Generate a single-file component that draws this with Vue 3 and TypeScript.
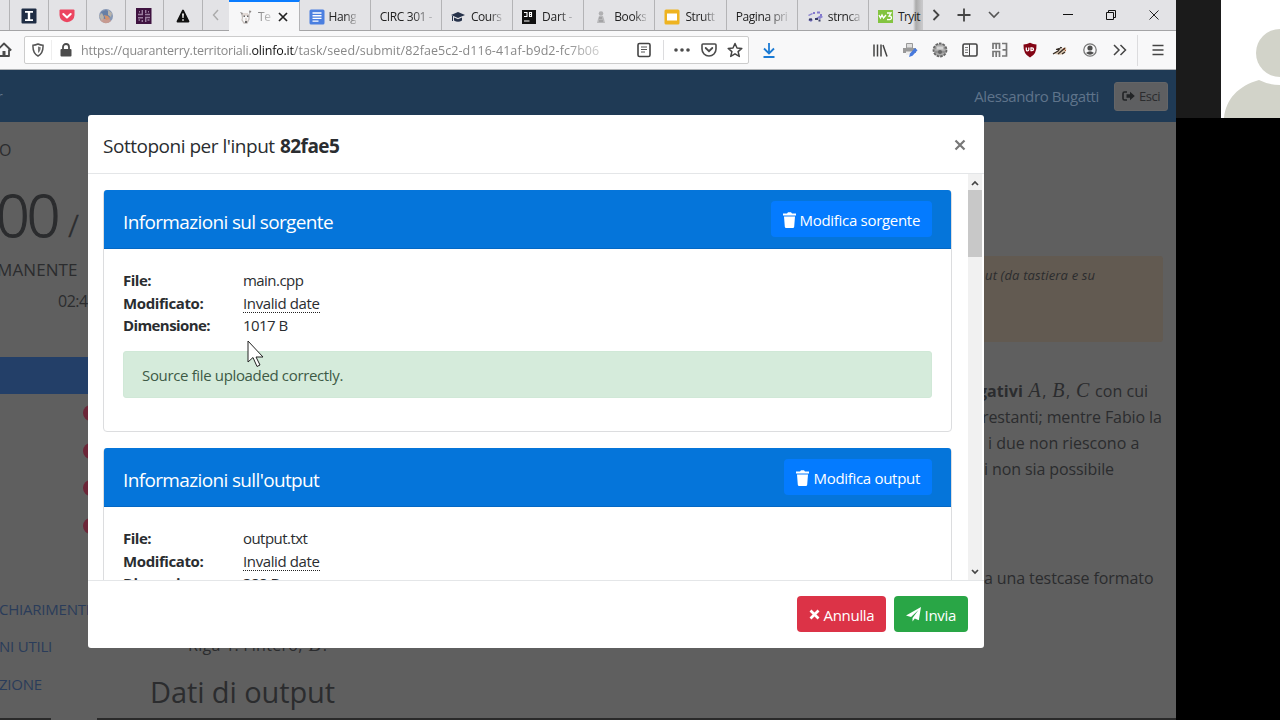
<script setup lang="ts">
interface Tab {
  id: string
  label: string
}
interface FileCard {
  title: string
  action: string
  file: string
  modified: string
  size: string
  message: string
}

const pinned: string[] = ['instapaper', 'pocket', 'globe', 'slack', 'alert']
const tabs: Tab[] = [
  { id: 'docs', label: 'Hang' },
  { id: 'circ', label: 'CIRC 301 -' },
  { id: 'course', label: 'Cours' },
  { id: 'dart', label: 'Dart -' },
  { id: 'books', label: 'Books' },
  { id: 'slides', label: 'Strutt' },
  { id: 'pagina', label: 'Pagina pri' },
  { id: 'cpp', label: 'strnca' },
  { id: 'w3', label: 'Tryit' },
]
const cards: FileCard[] = [
  {
    title: 'Informazioni sul sorgente',
    action: 'Modifica sorgente',
    file: 'main.cpp',
    modified: 'Invalid date',
    size: '1017 B',
    message: 'Source file uploaded correctly.',
  },
  {
    title: "Informazioni sull'output",
    action: 'Modifica output',
    file: 'output.txt',
    modified: 'Invalid date',
    size: '388 B',
    message: '',
  },
]
</script>

<template>
  <div class="stage">
    <div class="browser">
      <div class="tabstrip">
        <div class="lead"></div>
        <div v-for="p in pinned" :key="p" class="pin">
          <svg v-if="p === 'instapaper'" width="16" height="16" viewBox="0 0 16 16">
            <rect x="0.500" y="0.500" width="15" height="15" rx="1" fill="#1f2d44" />
            <path d="M4 3h8v1.700H9.200v6.600H12V13H4v-1.700h2.800V4.700H4z" fill="#fff" />
          </svg>
          <svg v-else-if="p === 'pocket'" width="16" height="16" viewBox="0 0 16 16">
            <path d="M1.500 1.500h13q1 0 1 1V7a7.500 7.200 0 0 1-15 0V2.500q0-1 1-1z" fill="#ec4660" />
            <path d="M4.300 6 8 9.500 11.700 6" fill="none" stroke="#fff" stroke-width="2" stroke-linecap="round" stroke-linejoin="round" />
          </svg>
          <svg v-else-if="p === 'globe'" width="16" height="16" viewBox="0 0 16 16">
            <circle cx="8" cy="8" r="7" fill="#8697b5" />
            <path d="M2 12a7 7 0 0 0 11 1l-3-4-5-1z" fill="#c79a90" />
            <path d="M3 4l5-2 5 3-2 5-5 1z" fill="#667fa6" />
            <path d="M1 8l3-3 2 4-2 4zM10 2l4 3-1 4-3-2z" fill="#b8b3aa" />
            <path d="M6 7l4 1 2 3-4 1z" fill="#d0926c" />
          </svg>
          <svg v-else-if="p === 'slack'" width="16" height="16" viewBox="0 0 16 16">
            <rect width="15.500" height="16" fill="#3f1340" />
            <g fill="none" stroke="#9b7fa0" stroke-width="1.400">
              <path d="M6.300 2v4.500H2M9.700 2v3M14 6.500H9M2 9.700h5M9.700 14V9.500H14M6.300 14v-2M11.500 12h2M2.500 12h1.500M3 3.800h1M12 3.800h1" />
            </g>
          </svg>
          <svg v-else width="16" height="16" viewBox="0 0 16 16">
            <path d="M8 2.500 13.500 13.500h-11z" fill="#111" stroke="#111" stroke-width="1.800" stroke-linejoin="round" />
            <path d="M7 5.500h2L8.600 10H7.400zM7.200 11.200h1.600v1.600H7.200z" fill="#eee" />
          </svg>
        </div>
        <div class="scroll-left">
          <svg width="8" height="12" viewBox="0 0 8 12"><path d="M6 1 1.500 6 6 11" fill="none" stroke="#aaa" stroke-width="1.400" /></svg>
        </div>
        <div class="tab active">
          <svg width="14" height="16" viewBox="0 0 14 16">
            <path d="M3 5q1 4 0 6l2 3h3l2-4V5" fill="none" stroke="#c5bebb" stroke-width="1.300" />
            <path d="M4 4h5v3H4zM6 9h2v5H6z" fill="#e2d9d5" />
            <path d="M10 1.500l2.500.5L10.500 5zM1 3l3 1-1 2z" fill="#8d8887" />
            <path d="M4.500 6.500h1.500V8H4.500zM8 6.500h1.500V8H8zM6 12h2v2H6z" fill="#666" />
          </svg>
          <span class="label">Te</span>
          <svg class="close" width="10" height="10" viewBox="0 0 10 10"><path d="M1 1l8 8M9 1 1 9" stroke="#222" stroke-width="1.700" /></svg>
        </div>
        <div v-for="t in tabs" :key="t.id" class="tab" :class="t.id">
          <svg v-if="t.id === 'docs'" width="16" height="16" viewBox="0 0 16 16">
            <rect x="0.500" y="0.500" width="15" height="15" rx="1.500" fill="#4b7fe0" />
            <path d="M3.500 4h9M3.500 6.700h9M3.500 9.400h9M3.500 12.100h6" stroke="#fff" stroke-width="1.400" />
          </svg>
          <svg v-else-if="t.id === 'course'" width="14" height="14" viewBox="0 0 14 14">
            <path d="M0 5l7-3 7 3-7 3z" fill="#26324a" />
            <path d="M3 7.500v3q4 2.500 8 0v-3L7 9.300zM1 6h1v5H1z" fill="#26324a" />
          </svg>
          <svg v-else-if="t.id === 'dart'" width="14" height="14" viewBox="0 0 14 14">
            <rect width="14" height="14" fill="#111" />
            <path d="M2 2.500h3v4H2M7.500 2v5M7 2.500h2.500v4H7M7.500 4.500H10M2 11h5.500" fill="none" stroke="#fff" stroke-width="1.100" />
          </svg>
          <svg v-else-if="t.id === 'books'" width="14" height="14" viewBox="0 0 14 14">
            <circle cx="8" cy="3.500" r="2.300" fill="#b0b0b2" />
            <path d="M6 6h4l1 3 1 4H4l1-4z" fill="#b8b8ba" />
            <path d="M6 8h3M6 11h4" stroke="#8e8e90" />
          </svg>
          <svg v-else-if="t.id === 'slides'" width="16" height="16" viewBox="0 0 16 16">
            <rect x="0.500" y="0.500" width="15" height="15" rx="1.500" fill="#eeb320" />
            <rect x="3" y="4.500" width="10" height="7" fill="#fff" />
          </svg>
          <svg v-else-if="t.id === 'cpp'" width="16" height="14" viewBox="0 0 16 14">
            <path d="M1 5l4-2 1 1-4 2zM1 10l3-2 2 2-2 2zM9 8l5-3 2 2-3 2z" fill="#8a83d0" />
            <path d="M6 3h2M10 2.500h3M13 5h2" stroke="#8478cc" stroke-width="1.800" />
            <path d="M2 9.500h3M8 9h3M11.500 10.500h2" stroke="#3b3f66" stroke-width="2" />
          </svg>
          <svg v-else-if="t.id === 'w3'" width="15" height="13" viewBox="0 0 15 13">
            <rect width="15" height="13" fill="#83c440" />
            <path d="M1 5l1.500 3L4 5l1.500 3L8 5" fill="none" stroke="#fff" stroke-width="1.300" />
            <path d="M9 3h4l-2 3q2.500 0 2.500 2T9 9.500" fill="none" stroke="#fff" stroke-width="1.300" />
          </svg>
          <span class="label">{{ t.label }}</span>
        </div>
        <div class="strip-tools">
          <svg width="8" height="12" viewBox="0 0 8 12"><path d="M1.500 1 6.500 6 1.500 11" fill="none" stroke="#444" stroke-width="1.800" /></svg>
          <svg width="14" height="14" viewBox="0 0 14 14"><path d="M7 .5v13M.5 7h13" stroke="#444" stroke-width="1.800" /></svg>
          <svg width="12" height="8" viewBox="0 0 12 8"><path d="M1 1l5 5 5-5" fill="none" stroke="#555" stroke-width="1.600" /></svg>
        </div>
        <div class="window-tools">
          <svg width="10" height="10" viewBox="0 0 10 10"><path d="M0 4.500h10" stroke="#111" /></svg>
          <svg width="10" height="10" viewBox="0 0 10 10"><path d="M.5 2.500h7v7h-7zM2.500 2.500v-2h7v7h-2" fill="none" stroke="#111" /></svg>
          <svg width="10" height="10" viewBox="0 0 10 10"><path d="M.5.5l9 9M9.500.5l-9 9" stroke="#222" stroke-width="1" /></svg>
        </div>
      </div>

      <div class="toolbar">
        <svg class="home" width="16" height="16" viewBox="0 0 16 16">
          <path d="M.8 8.500 8 1.500l7.200 7M3 7.500V14h10V7.500" fill="none" stroke="#4a4a4a" stroke-width="1.800" stroke-linejoin="round" />
          <path d="M6.500 14V9h3v5z" fill="#4a4a4a" />
        </svg>
        <div class="urlbar">
          <svg class="shield" width="12" height="14" viewBox="0 0 12 14">
            <path d="M1 2.200Q3.500 2.200 6 1q2.500 1.200 5 1.200Q11.500 10 6 13 .5 10 1 2.200z" fill="none" stroke="#555" stroke-width="1.500" />
            <path d="M6 3.500v6.500Q8.800 8 8.700 4.200z" fill="#777" />
          </svg>
          <i class="thin faint"></i>
          <svg class="lock" width="12" height="14" viewBox="0 0 12 14">
            <rect x="0.500" y="6" width="11" height="7.500" rx="1" fill="#4c4c4c" />
            <path d="M3 6V4a3 3 0 0 1 6 0v2" fill="none" stroke="#4c4c4c" stroke-width="1.800" />
          </svg>
          <span class="url"><span>https://quaranterry.territoriali.<b>olinfo.it</b></span><span class="path">/task/seed/submit/82fae5c2-d116-41af-b9d2-fc7b06</span></span>
          <svg class="reader" width="14" height="16" viewBox="0 0 14 16">
            <rect x="1" y="1.500" width="12" height="13" rx="1.500" fill="none" stroke="#444" stroke-width="1.600" />
            <path d="M4 5h6M4 7.500h6M4 10h4" stroke="#555" />
          </svg>
          <i class="thin"></i>
          <svg class="dots" width="16" height="4" viewBox="0 0 16 4"><circle cx="2" cy="2" r="1.800" /><circle cx="8" cy="2" r="1.800" /><circle cx="14" cy="2" r="1.800" /></svg>
          <svg class="pocket" width="16" height="14" viewBox="0 0 16 14">
            <path d="M2 1h12q1 0 1 1v4a7 7 0 0 1-14 0V2q0-1 1-1z" fill="none" stroke="#4c4c4c" stroke-width="1.600" />
            <path d="M4.700 5 8 8.200 11.300 5" fill="none" stroke="#4c4c4c" stroke-width="1.800" stroke-linecap="round" />
          </svg>
          <svg class="star" width="16" height="16" viewBox="0 0 16 16">
            <path d="M8 1.500 10 6l4.800.4-3.700 3.200 1.200 4.800L8 11.800l-4.300 2.600 1.200-4.800L1.200 6.400 6 6z" fill="none" stroke="#444" stroke-width="1.500" stroke-linejoin="round" />
          </svg>
        </div>
        <svg class="download" width="14" height="16" viewBox="0 0 14 16">
          <path d="M7 1v10M2 6.500l5 5 5-5M1.500 15h11" fill="none" stroke="#1c7bd4" stroke-width="1.800" />
        </svg>
        <div class="addons">
          <svg width="16" height="16" viewBox="0 0 16 16"><path d="M2 2.500v12M5.500 2.500v12M9 2.500v12M11 3l4 11.500" stroke="#444" stroke-width="1.500" /></svg>
          <svg width="16" height="16" viewBox="0 0 16 16">
            <path d="M4.500 1.500h6V6h-6z" fill="#dedede" stroke="#999" />
            <path d="M1 6h13v5H1z" fill="#999" />
            <path d="M4 9.500h6V13H4z" fill="#eee" />
            <path d="M7 15l1-3.500L13 6l2.500 2.200-5 5.500z" fill="#4779dd" />
          </svg>
          <svg width="16" height="16" viewBox="0 0 16 16">
            <circle cx="8" cy="8" r="6.500" fill="#aaa" stroke="#666" stroke-width="1.800" stroke-dasharray="2.600 1" />
            <path d="M3 6h10M3 10h10" stroke="#777" />
            <path d="M4.500 4.500h7v3h-7z" fill="#d4d4d4" />
            <circle cx="8" cy="10" r="2" fill="#666" />
          </svg>
          <svg width="16" height="16" viewBox="0 0 16 16">
            <rect x="1" y="2" width="14" height="12" rx="1.500" fill="none" stroke="#444" stroke-width="1.600" />
            <path d="M7.500 2v12" stroke="#444" /><path d="M3 5.500h3M3 8h3M3 10.500h3" stroke="#777" />
          </svg>
          <svg width="16" height="16" viewBox="0 0 16 16" fill="none" stroke="#777" stroke-width="1.700">
            <path d="M1 7V1.500h6.500V7M4.200 2v5M1 15V9.500h6.500V15M4.200 10v5M10 1.500h4.500V14H10M10.500 7.800h4" />
          </svg>
          <svg width="16" height="16" viewBox="0 0 16 16">
            <path d="M8 .7q3 1.800 6.500 1.800Q15 12 8 15.500 1 12 1.500 2.500 5 2.500 8 .7z" fill="#830515" />
            <path d="M4.300 5.500v2.200q0 1.200 1.200 1.200T6.800 7.700V5.500M9 5.800v2.800h1q1.500 0 1.500-1.400T10 5.800z" fill="none" stroke="#fff" stroke-width="1.300" />
          </svg>
          <svg width="16" height="16" viewBox="0 0 16 16">
            <path d="M1 11q5-1 8-4l5-2q1 4-2 7-6 2-11-1z" fill="#d9c4ad" />
            <path d="M1 12l5-3 3-4M6 12l7-6M4 7.500l6-2M10 12l3-2" fill="none" stroke="#332b24" stroke-width="1.200" />
            <path d="M11 6l3 3" stroke="#a45a38" />
          </svg>
          <svg width="16" height="16" viewBox="0 0 16 16">
            <circle cx="8" cy="8" r="6.200" fill="none" stroke="#777" stroke-width="1.300" />
            <circle cx="8" cy="6" r="2.600" fill="#4d4d4d" /><path d="M4 11q4-3.500 8 0-4 3.500-8 0z" fill="#4d4d4d" />
          </svg>
          <svg width="16" height="16" viewBox="0 0 16 16"><path d="M2 3l5 5-5 5M8.500 3l5 5-5 5" fill="none" stroke="#444" stroke-width="1.500" /></svg>
        </div>
        <i class="thin menu-sep"></i>
        <svg class="menu" width="12" height="12" viewBox="0 0 12 12"><path d="M.5 1.500h11M.5 6h11M.5 10.500h11" stroke="#444" stroke-width="1.500" /></svg>
      </div>

      <div class="page">
        <div class="navbar">
          <span class="crumb">r</span>
          <span class="user">Alessandro Bugatti</span>
          <span class="logout">
            <svg width="13" height="11" viewBox="0 0 13 11">
              <path d="M5 1H2.500Q1 1 1 2.500v5Q1 9 2.500 9H5" fill="none" stroke="#222426" stroke-width="1.600" />
              <path d="M4.500 3.300h3.500V.7L12.800 5 8 9.300V6.700H4.500z" fill="#222426" />
            </svg>
            <span>Esci</span>
          </span>
        </div>
        <div class="columns">
          <aside>
            <div class="s-head">O</div>
            <div class="s-score"><span>00</span><small>/</small></div>
            <div class="s-left">MANENTE</div>
            <div class="s-time">02:4</div>
            <div class="s-selected"></div>
            <div class="s-badges"><i v-for="n in 4" :key="n"></i></div>
            <div class="s-links"><span>CHIARIMENTI</span><span>NI UTILI</span><span>ZIONE</span></div>
          </aside>
          <main>
            <div class="hint">ut (da tastiera e su</div>
            <div class="para">
              <p class="l1"><b>gativi</b> <em>A</em>, <em>B</em>, <em>C</em> con cui</p>
              <p class="l2">restanti; mentre Fabio la</p>
              <p class="l3">i due non riescono a</p>
              <p class="l4">i non sia possibile</p>
            </div>
            <p class="format">a una testcase formato</p>
            <p class="riga"><span class="bullet">•</span><span>Riga 1: l'intero, <em>B</em>.</span></p>
            <h2>Dati di output</h2>
          </main>
        </div>
        <div class="bottom-edge"><i></i></div>
      </div>

      <div class="modal">
        <header>
          <h5>Sottoponi per l'input <b>82fae5</b></h5>
          <svg width="12" height="12" viewBox="0 0 12 12"><path d="M1.500 1.500l9 9M10.500 1.500l-9 9" stroke="#777" stroke-width="2.200" /></svg>
        </header>
        <div class="body">
          <div class="cards">
            <section v-for="c in cards" :key="c.title" class="card">
              <div class="card-head">
                <h4>{{ c.title }}</h4>
                <button>
                  <svg width="13" height="16" viewBox="0 0 13 16"><path d="M0 1.500h4L5 .3h3l1 1.200h4v2H0zM1 4.500h11l-.8 10.200q-.1 1.300-1.400 1.300H3.200q-1.300 0-1.400-1.300z" fill="#fff" /></svg>
                  <span>{{ c.action }}</span>
                </button>
              </div>
              <div class="card-body">
                <dl>
                  <dt>File:</dt><dd>{{ c.file }}</dd>
                  <dt class="mod">Modificato:</dt><dd><abbr>{{ c.modified }}</abbr></dd>
                  <dt class="dim">Dimensione:</dt><dd>{{ c.size }}</dd>
                </dl>
                <div v-if="c.message" class="alert"><span>{{ c.message }}</span></div>
              </div>
            </section>
          </div>
          <div class="scrollbar">
            <svg width="8" height="6" viewBox="0 0 8 6"><path d="M1 5l3-3 3 3" fill="none" stroke="#444" stroke-width="1.700" /></svg>
            <div class="thumb"></div>
            <svg class="down" width="8" height="6" viewBox="0 0 8 6"><path d="M1 1l3 3 3-3" fill="none" stroke="#444" stroke-width="1.700" /></svg>
          </div>
        </div>
        <footer>
          <button class="cancel">
            <svg width="11" height="11" viewBox="0 0 11 11"><path d="M1.500 1.500l8 8M9.500 1.500l-8 8" stroke="#fff" stroke-width="2.700" /></svg>
            <span>Annulla</span>
          </button>
          <button class="send">
            <svg width="15" height="15" viewBox="0 0 15 15"><path d="M15 0l-2.200 13.200-4-1.700-2.300 3V11L12.500 3 5 10 0 8.500z" fill="#fff" /></svg>
            <span>Invia</span>
          </button>
        </footer>
      </div>

      <svg class="pointer" width="18" height="30" viewBox="0 0 18 30">
        <path d="M1 1v21l5-4.500 4 9 3-1.500-4-8h7z" fill="#fff" stroke="#222" stroke-width="1" />
      </svg>
    </div>

    <div class="call">
      <div class="call-strip">
        <svg width="59" height="118" viewBox="0 0 59 118">
          <rect width="59" height="118" fill="#fff" />
          <circle cx="59" cy="53" r="24" fill="#d2d3c9" />
          <path d="M3 118C5 99 17 86 38 80q10 5 21 5v33z" fill="#d2d3c9" />
        </svg>
      </div>
    </div>
  </div>
</template>

<style>
body {
  margin: 0;
  background: #000;
}
</style>

<style scoped>
* {
  box-sizing: border-box;
}
.stage {
  display: flex;
  width: 1280px;
  height: 720px;
  overflow: hidden;
  background: #000;
  font-family: "Open Sans", "Noto Sans", sans-serif;
}
.stage svg {
  display: block;
  flex: none;
}
.browser {
  position: relative;
  width: 1176px;
  height: 720px;
  overflow: hidden;
  display: flex;
  flex-direction: column;
}
.call-strip {
  width: 104px;
  height: 118px;
  padding-left: 45px;
  background: #1b1b1b;
}

/* tab strip */
.tabstrip {
  display: flex;
  height: 31px;
  background: #e3e3e6;
  border-bottom: 1px solid #a4a4a6;
}
.lead {
  width: 10px;
  border-right: 1px solid #b4b4b6;
}
.pin {
  width: 38.500px;
  border-right: 1px solid #b4b4b6;
  display: flex;
  justify-content: center;
  padding-top: 8px;
}
.scroll-left {
  width: 26.500px;
  padding: 9px 0 0 9px;
}
.tab {
  width: 71.200px;
  height: 30px;
  padding: 3px 4px 0 9px;
  display: flex;
  align-items: center;
  gap: 5px;
  border-right: 1px solid #b4b4b6;
  font-size: 12px;
  color: #222;
}
.tab .label {
  white-space: nowrap;
  letter-spacing: -0.4px;
  mask-image: linear-gradient(to right, #000 60%, #0003 100%);
}
.tab.active {
  width: 70.500px;
  height: 31px;
  background: #f7f7f8;
  border-top: 2px solid #0a7cff;
  padding: 0 11px 0 10px;
  gap: 4px;
}
.tab.active .label {
  padding-left: 1px;
  mask-image: linear-gradient(to right, #0009, #0003);
}
.tab.active .close {
  margin-left: auto;
}
.tab.docs {
  gap: 4px;
}
.tab.course,
.tab.dart {
  gap: 6px;
}
.tab.books {
  gap: 7px;
}
.tab.dart .label {
  letter-spacing: -0.2px;
}
.tab.w3 {
  width: 54px;
  border-right: 0;
  padding-right: 0;
  background: linear-gradient(to right, transparent 44px, #aaa 47px, #c8c8ca 53px);
}
.tab.w3 .label {
  letter-spacing: -0.6px;
  mask-image: none;
}
.strip-tools {
  display: flex;
  align-items: center;
  gap: 17px;
  padding-left: 9px;
}
.window-tools {
  margin-left: auto;
  display: flex;
  align-items: center;
  gap: 33px;
  padding-right: 17px;
}

/* toolbar */
.toolbar {
  display: flex;
  align-items: center;
  height: 39px;
  background: #f8f8f9;
  border-bottom: 1px solid #b0b3b6;
}
.home {
  margin-left: -4px;
}
.urlbar {
  display: flex;
  align-items: center;
  flex: none;
  width: 725px;
  height: 28px;
  margin-left: 12px;
  padding: 0 5px 0 7px;
  background: #fff;
  border: 1px solid #ccc;
  border-radius: 2px;
}
.thin {
  width: 1px;
  height: 20px;
  background: #dcdcde;
}
.thin.faint {
  background: #eee;
}
.shield {
  margin-right: 7px;
}
.lock {
  margin: 0 9px 0 8px;
}
.url {
  white-space: nowrap;
  padding-top: 1px;
  font-size: 12.500px;
  line-height: 20px;
  letter-spacing: -0.21px;
  color: #888;
  mask-image: linear-gradient(to right, #000 93%, #0006 100%);
}
.url .path {
  letter-spacing: 0.06px;
}
.url b {
  font-weight: 400;
  color: #111;
}
.reader {
  margin-left: auto;
  margin-right: 12px;
}
.dots {
  fill: #4c4c4c;
  margin: 0 11px 0 10px;
}
.pocket {
  margin-right: 10px;
}
.download {
  margin-left: 13px;
}
.addons {
  display: flex;
  gap: 14px;
  margin-left: 95.500px;
}
.menu-sep {
  height: 31px;
  margin-left: 9.500px;
}
.menu {
  margin-left: 14px;
}

/* page under the backdrop */
.page {
  flex: 1;
  display: flex;
  flex-direction: column;
  background: #5f5f5f;
  color: #2b2c2e;
}
.navbar {
  height: 52px;
  display: flex;
  align-items: center;
  background: #1f3a55;
  font-size: 15px;
  color: #5f748b;
  padding-right: 8px;
}
.crumb {
  font-size: 14px;
  margin-left: -3px;
}
.user {
  margin-left: auto;
  margin-right: 15px;
  letter-spacing: -0.38px;
}
.logout {
  display: flex;
  align-items: center;
  justify-content: center;
  gap: 4px;
  width: 54px;
  height: 29px;
  border-radius: 3px;
  background: #5e5f61;
  border: 1px solid #646567;
  color: #2b2c2e;
  font-size: 13px;
  letter-spacing: -0.5px;
}
.columns {
  flex: 1;
  display: flex;
  min-height: 0;
}
aside {
  width: 88px;
  overflow: hidden;
  white-space: nowrap;
}
.s-head {
  height: 24px;
  margin-top: 16px;
  margin-left: -1px;
  font-size: 16px;
  line-height: 24px;
}
.s-score {
  height: 64px;
  margin-top: 20px;
  display: flex;
  align-items: baseline;
  line-height: 64px;
  font-size: 59px;
  font-weight: 300;
  letter-spacing: -3px;
  -webkit-text-stroke: 1.200px #2b2c2e;
}
.s-score span {
  margin-left: -4px;
}
.s-score small {
  font-size: 31px;
  margin-left: 11px;
  -webkit-text-stroke: 0.500px #2b2c2e;
}
.s-left {
  margin-top: 12px;
  margin-left: -3px;
  font-size: 17px;
  line-height: 24px;
  letter-spacing: 0.1px;
}
.s-time {
  margin-top: 7px;
  padding-left: 58px;
  font-size: 16px;
  line-height: 24px;
  letter-spacing: -0.5px;
}
.s-selected {
  height: 37px;
  margin-top: 44px;
  background: #233f68;
}
.s-badges {
  display: flex;
  flex-direction: column;
  gap: 21.500px;
  padding: 11px 0 0 82.500px;
}
.s-badges i {
  flex: none;
  width: 16px;
  height: 16px;
  border-radius: 8px;
  background: #6c2638;
}
.s-links {
  display: flex;
  flex-direction: column;
  gap: 13.500px;
  margin-top: 63px;
  margin-left: -1px;
  font-size: 15px;
  line-height: 24px;
  letter-spacing: -0.22px;
  color: #2a3c5a;
}
main {
  flex: 1;
  display: flex;
  flex-direction: column;
  white-space: nowrap;
}
main p {
  margin: 0;
  font-size: 16px;
  line-height: 26px;
  letter-spacing: -0.1px;
}
main em {
  font-family: "Liberation Serif", serif;
  font-size: 20px;
  line-height: 20px;
  margin: 0 1.500px;
}
.hint {
  margin: 134px 13px 0 62px;
  height: 86px;
  padding: 8px 0 0 835px;
  border-radius: 3px;
  background: #625a51;
  font-size: 13px;
  line-height: 22px;
  font-style: italic;
  letter-spacing: 0.15px;
}
.para {
  margin-top: 36px;
}
.para p,
.format {
  padding-left: 894px;
}
.para .l1 {
  padding-left: 890px;
  letter-spacing: 0.05px;
}
.para .l3 {
  padding-left: 900px;
  letter-spacing: 0;
}
.para .l4,
.format {
  padding-left: 896px;
}
main .format {
  margin-top: 83px;
}
main .riga {
  margin-top: 41px;
  padding-left: 84px;
  display: flex;
  letter-spacing: 0.3px;
}
.riga .bullet {
  width: 16px;
}
h2 {
  margin: 14px 0 0 62px;
  font-size: 29px;
  line-height: 40px;
  font-weight: 400;
  letter-spacing: -0.1px;
}
.bottom-edge {
  height: 2px;
  background: #2a2a2a;
}
.bottom-edge i {
  display: block;
  width: 46px;
  height: 2px;
  margin-left: 51px;
  background: #5f5f5f;
}

/* dialog */
.modal {
  position: absolute;
  left: 87.500px;
  top: 114.500px;
  width: 896px;
  height: 533px;
  display: flex;
  flex-direction: column;
  background: #fff;
  border-radius: 3px;
  color: #2a2d30;
  font-size: 15px;
}
header {
  height: 59.500px;
  display: flex;
  justify-content: space-between;
  align-items: flex-start;
  padding: 17.500px 18px 0 15.500px;
  border-bottom: 1px solid #e4e6e8;
}
header svg {
  margin-top: 6.500px;
}
h5 {
  margin: 0;
  font-size: 19px;
  line-height: 28px;
  font-weight: 400;
  letter-spacing: -0.48px;
}
h5 b {
  padding-left: 1px;
  letter-spacing: -0.6px;
}
.body {
  display: flex;
  height: 406px;
  overflow: hidden;
}
.cards {
  flex: 1;
  padding: 15.500px 16px 0 15.500px;
}
.card {
  height: 242px;
  margin-bottom: 16px;
  border: 1px solid #dcdddf;
  border-radius: 4px;
  background: #fff;
}
.card-head {
  height: 59px;
  margin-top: -0.500px;
  display: flex;
  justify-content: space-between;
  align-items: center;
  padding: 3px 19px 0;
  background: #0575da;
  border-bottom: 1px solid #0468c4;
  border-radius: 3px 3px 0 0;
  color: #fff;
}
h4 {
  margin: 2px 0 0;
  font-size: 19px;
  line-height: 28px;
  font-weight: 400;
  letter-spacing: -0.64px;
}
button {
  display: flex;
  align-items: center;
  gap: 4px;
  height: 36px;
  padding: 0 12px;
  border: 0;
  border-radius: 4px;
  background: #047bff;
  color: #fff;
  font: inherit;
  letter-spacing: -0.3px;
}
.card-head button {
  margin-bottom: 3px;
  padding-top: 1px;
}
.card-body {
  padding: 20px 19px 0;
}
dl {
  margin: 0;
  display: grid;
  grid-template-columns: 120px 1fr;
  line-height: 22.600px;
}
dt {
  font-weight: 700;
  letter-spacing: -0.5px;
}
dt.mod {
  letter-spacing: -0.4px;
}
dt.dim {
  letter-spacing: -0.6px;
}
dd {
  margin: 0;
  letter-spacing: -0.55px;
}
abbr {
  border-bottom: 1px dotted #222;
  display: inline-block;
  line-height: 17px;
  letter-spacing: -0.38px;
}
.alert {
  height: 47px;
  margin-top: 14px;
  padding: 12px 18px;
  background: #d5ebdb;
  border: 1px solid #d0e8d7;
  border-radius: 3px;
  line-height: 23px;
  color: #3d5a46;
  letter-spacing: -0.35px;
}
.scrollbar {
  width: 14px;
  margin-right: 1.500px;
  display: flex;
  flex-direction: column;
  align-items: center;
  padding: 6px 0 5px;
  background: #f1f1f1;
}
.thumb {
  width: 14px;
  height: 67px;
  margin-top: 4px;
  background: #c8c8c8;
}
.scrollbar .down {
  margin-top: auto;
}
footer {
  flex: 1;
  display: flex;
  justify-content: flex-end;
  align-items: flex-start;
  gap: 8px;
  padding: 15px 16px 0;
  border-top: 1px solid #e4e6e8;
}
footer button {
  padding-top: 1px;
}
.cancel {
  width: 89px;
  background: #dc3347;
}
.send {
  width: 74px;
  background: #29a646;
}
.pointer {
  position: absolute;
  left: 247px;
  top: 340px;
}
</style>
